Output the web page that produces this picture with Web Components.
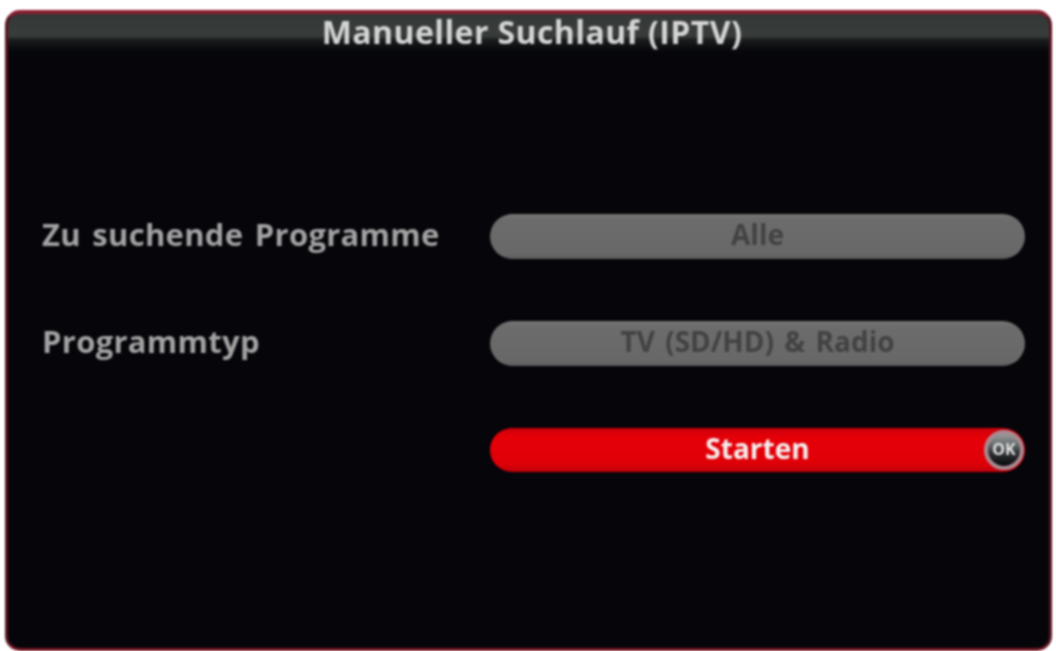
<!DOCTYPE html>
<html>
<head>
<meta charset="utf-8">
<style>
  html, body { margin: 0; height: 100%; background: #fff; overflow: hidden; }
  body { font-family: "Open Sans", sans-serif; }
</style>
</head>
<body>
<tv-dialog heading="Manueller Suchlauf (IPTV)">
  <tv-row label="Zu suchende Programme"><tv-pill>Alle</tv-pill></tv-row>
  <tv-row label="Programmtyp"><tv-pill>TV (SD/HD) &amp; Radio</tv-pill></tv-row>
  <tv-row><tv-pill active>Starten<ok-badge slot="badge"></ok-badge></tv-pill></tv-row>
</tv-dialog>

<script>
class TvDialog extends HTMLElement {
  constructor() {
    super();
    this.shadow = this.attachShadow({ mode: 'open' });
  }
  connectedCallback() {
    this.shadow.innerHTML = /*html*/`
    <style>
      :host {
        display: block;
        box-sizing: border-box;
        width: 1047px;
        height: 641px;
        margin: 10px 0 0 5px;
        border: 3px solid #5a1622;
        border-top: 4px solid #8a1e30;
        border-bottom-color: #761824;
        border-radius: 15px;
        background: #05050a;
        overflow: hidden;
        filter: blur(0.8px);
      }
      .title {
        height: 42px;
        box-sizing: border-box;
        padding: 0 0 8px 7px;
        display: flex;
        align-items: center;
        justify-content: center;
        color: #d4d4d4;
        font-size: 32px;
        font-weight: 700;
        letter-spacing: 0.4px;
        background: linear-gradient(#343837 0, #383c3b 22px, #1a1c1d 26px, #08090c 36px, #05050a 42px);
      }
      .rows {
        display: flex;
        flex-direction: column;
        gap: 62px;
        padding: 158px 26px 0 34px;
      }
    </style>
    <div class="title">${this.getAttribute('heading')}</div>
    <div class="rows"><slot></slot></div>
    `;
  }
}

class TvRow extends HTMLElement {
  constructor() {
    super();
    this.shadow = this.attachShadow({ mode: 'open' });
  }
  connectedCallback() {
    this.shadow.innerHTML = /*html*/`
    <style>
      :host {
        display: grid;
        grid-template-columns: 448px 535px;
        align-items: center;
      }
      .label {
        color: #a2a2a2;
        font-size: 31px;
        line-height: 40px;
        font-weight: 700;
        letter-spacing: 0.3px;
        white-space: nowrap;
        padding-bottom: 5px;
        word-spacing: 3px;
      }
    </style>
    <div class="label">${this.getAttribute('label') || ''}</div>
    <slot></slot>
    `;
  }
}

class TvPill extends HTMLElement {
  constructor() {
    super();
    this.shadow = this.attachShadow({ mode: 'open' });
  }
  connectedCallback() {
    this.shadow.innerHTML = /*html*/`
    <style>
      :host {
        display: flex;
        position: relative;
        box-sizing: border-box;
        height: 45px;
        padding-bottom: 5px;
        align-items: center;
        justify-content: center;
        border-radius: 23px;
        background: linear-gradient(#767676, #6c6c6c 12%, #686868 88%, #5c5c5c);
        color: #424242;
        font-size: 28px;
        font-weight: 700;
        word-spacing: 3px;
      }
      :host([active]) {
        height: 44px;
        background: linear-gradient(#c9000a, #e60008 20%, #e00008 80%, #c0000a);
        color: #f6eeee;
      }
      ::slotted([slot=badge]) {
        position: absolute;
        right: 1px;
        top: 2px;
      }
    </style>
    <slot></slot>
    <slot name="badge"></slot>
    `;
  }
}

class OkBadge extends HTMLElement {
  constructor() {
    super();
    this.shadow = this.attachShadow({ mode: 'open' });
  }
  connectedCallback() {
    this.shadow.innerHTML = /*html*/`
    <style>
      :host {
        display: flex;
        box-sizing: border-box;
        width: 40px;
        height: 40px;
        align-items: center;
        justify-content: center;
        border: 4px solid #a98a90;
        border-radius: 50%;
        background: linear-gradient(#9a9c9c, #6a7270 30%, #2e3032 60%, #08090c);
        color: #e2e2e2;
        font-size: 16px;
        font-weight: 700;
        padding-bottom: 2px;
        word-spacing: 0;
      }
    </style>
    OK
    `;
  }
}

customElements.define('tv-dialog', TvDialog);
customElements.define('tv-row', TvRow);
customElements.define('tv-pill', TvPill);
customElements.define('ok-badge', OkBadge);
</script>
</body>
</html>
